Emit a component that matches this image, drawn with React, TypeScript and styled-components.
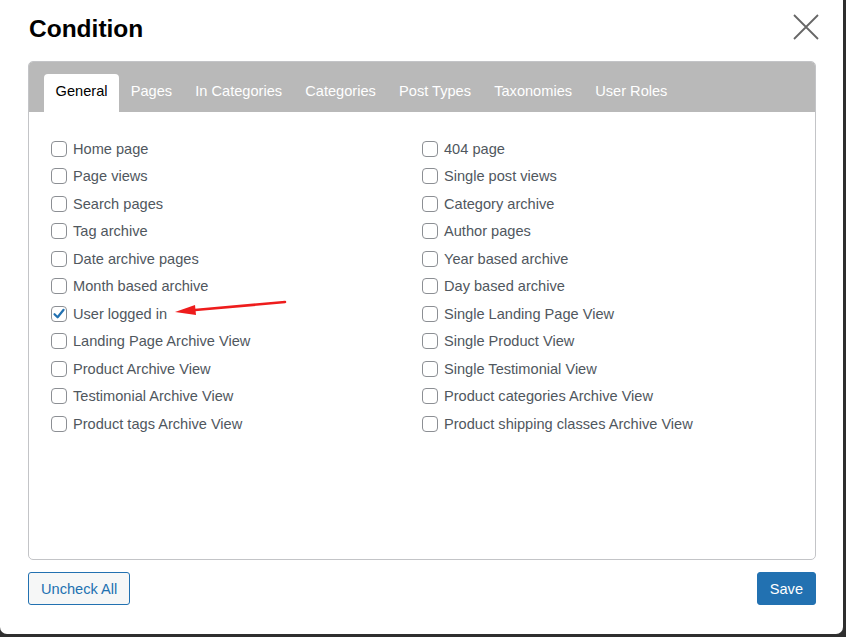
import React from "react";
import styled, { createGlobalStyle } from "styled-components";

const Global = createGlobalStyle`
  html, body { margin: 0; padding: 0; background: #2f2f2f; }
  body { font-family: Arial, "Liberation Sans", Helvetica, sans-serif; }
  * { box-sizing: border-box; }
`;

const Modal = styled.div`
  position: relative;
  width: 843px;
  height: 634px;
  background: #fff;
  border-radius: 0 0 7px 7px;
  padding: 0 27px 0 28px;
  display: flex;
  flex-direction: column;
`;

const Header = styled.div`
  height: 61px;
  display: flex;
  align-items: flex-start;
  justify-content: space-between;
`;

const Title = styled.h1`
  margin: 14px 0 0 1px;
  font-size: 24.5px;
  line-height: 30px;
  font-weight: 700;
  color: #000;
`;

const CloseButton = styled.button`
  margin: 13px -4px 0 0;
  width: 28px;
  height: 28px;
  padding: 0;
  border: none;
  background: none;
  cursor: pointer;
  display: flex;
`;

const Panel = styled.div`
  height: 499px;
  border: 1px solid #c3c4c7;
  border-radius: 5px;
  display: flex;
  flex-direction: column;
  overflow: hidden;
`;

const TabBar = styled.div`
  height: 50px;
  background: #b9b9b9;
  display: flex;
  align-items: flex-end;
  padding-left: 15px;
`;

const Tab = styled.div<{ $active?: boolean }>`
  height: 38px;
  padding: 0 11.6px 4px;
  display: flex;
  align-items: center;
  font-size: 14.6px;
  color: ${(p) => (p.$active ? "#000" : "#fff")};
  background: ${(p) => (p.$active ? "#fff" : "transparent")};
  border-radius: 4px 4px 0 0;
  white-space: nowrap;
`;

const Grid = styled.div`
  position: relative;
  display: grid;
  grid-template-columns: 371px 371px;
  grid-auto-rows: 27.5px;
  padding: 23px 22px 0 22px;
`;

const Option = styled.label`
  display: flex;
  align-items: center;
  gap: 6px;
  font-size: 14.6px;
  color: #50575e;
  white-space: nowrap;
`;

const Box = styled.span<{ $checked?: boolean }>`
  width: 16px;
  height: 16px;
  border: 1px solid #8c8f94;
  border-radius: 4px;
  background: #fff;
  display: flex;
  align-items: center;
  justify-content: center;
  flex-shrink: 0;
`;

const Arrow = styled.svg`
  position: absolute;
  left: 144px;
  top: 187px;
`;

const Footer = styled.div`
  display: flex;
  justify-content: space-between;
  padding-top: 12px;
`;

const Button = styled.button<{ $primary?: boolean }>`
  height: 33px;
  padding: 0 12px;
  border-radius: 3px;
  font-family: inherit;
  font-size: 14.6px;
  border: 1px solid #2271b1;
  background: ${(p) => (p.$primary ? "#2271b1" : "#f6f7f7")};
  color: ${(p) => (p.$primary ? "#fff" : "#2271b1")};
  cursor: pointer;
`;

const tabs = ["General", "Pages", "In Categories", "Categories", "Post Types", "Taxonomies", "User Roles"];

const left = [
  "Home page",
  "Page views",
  "Search pages",
  "Tag archive",
  "Date archive pages",
  "Month based archive",
  "User logged in",
  "Landing Page Archive View",
  "Product Archive View",
  "Testimonial Archive View",
  "Product tags Archive View",
];
const right = [
  "404 page",
  "Single post views",
  "Category archive",
  "Author pages",
  "Year based archive",
  "Day based archive",
  "Single Landing Page View",
  "Single Product View",
  "Single Testimonial View",
  "Product categories Archive View",
  "Product shipping classes Archive View",
];

const Check = ({ label, checked }: { label: string; checked?: boolean }) => (
  <Option>
    <Box $checked={checked}>
      {checked && (
        <svg width="14" height="14" viewBox="0 0 14 14">
          <path d="M2.5 7.2 L5.6 10.3 L11.6 2.8" fill="none" stroke="#2271b1" strokeWidth="2.2" strokeLinecap="round" strokeLinejoin="round" />
        </svg>
      )}
    </Box>
    {label}
  </Option>
);

export default function App() {
  const rows: React.ReactNode[] = [];
  for (let i = 0; i < left.length; i++) {
    rows.push(<Check key={"l" + i} label={left[i]} checked={left[i] === "User logged in"} />);
    rows.push(<Check key={"r" + i} label={right[i]} />);
  }
  return (
    <>
      <Global />
      <Modal>
        <Header>
          <Title>Condition</Title>
          <CloseButton aria-label="Close">
            <svg width="28" height="28" viewBox="0 0 28 28">
              <path d="M2 2 L26 26 M26 2 L2 26" stroke="#666" strokeWidth="1.8" />
            </svg>
          </CloseButton>
        </Header>
        <Panel>
          <TabBar>
            {tabs.map((t, i) => (
              <Tab key={t} $active={i === 0}>
                {t}
              </Tab>
            ))}
          </TabBar>
          <Grid>
            {rows}
            <Arrow width="120" height="16" viewBox="0 0 120 16">
              <line x1="112" y1="3" x2="22" y2="11" stroke="#ee1c1c" strokeWidth="2.6" strokeLinecap="round" />
              <polygon points="2,13 22,6 23,16" fill="#ee1c1c" />
            </Arrow>
          </Grid>
        </Panel>
        <Footer>
          <Button>Uncheck All</Button>
          <Button $primary>Save</Button>
        </Footer>
      </Modal>
    </>
  );
}
